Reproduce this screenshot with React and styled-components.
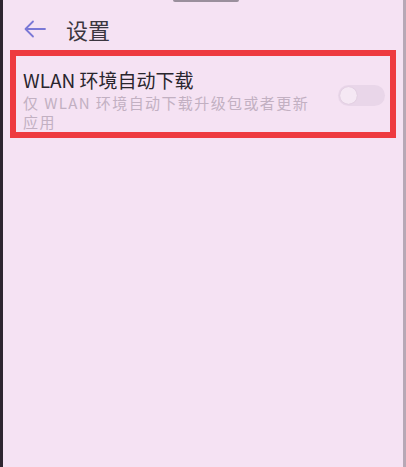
import styled, { createGlobalStyle } from "styled-components"

const GlobalStyle = createGlobalStyle`
    html, body {
        margin: 0;
        padding: 0;
        background: #f5e2f3;
    }
    * {
        box-sizing: border-box;
    }
`

const Screen = styled.div`
    position: relative;
    width: 406px;
    height: 467px;
    overflow: hidden;
    background: #f5e2f3;
    border-left: 3px solid #2e2530;
    border-right: 3px solid #b7a8b6;
    font-family: "Noto Sans CJK SC", "Noto Sans", sans-serif;
`
const Notch = styled.div`
    position: absolute;
    top: 0;
    left: 170px;
    width: 66px;
    height: 2px;
    border-radius: 0 0 3px 3px;
    background: #9a8f9c;
`
const Header = styled.div`
    display: flex;
    align-items: center;
    height: 50px;
    padding: 8px 0 0 21px;
    .back {
        display: block;
        width: 22px;
        height: 18px;
    }
    .title {
        margin-left: 20px;
        font-size: 22px;
        color: #3b3640;
        line-height: 1;
    }
`
const Highlight = styled.div`
    display: flex;
    align-items: center;
    margin: 0 7px 0 7px;
    padding: 11px 5px 1px 7px;
    border: 6px solid #ee3a40;
    .text {
        flex: 1;
        margin-right: 19px;
    }
    .name {
        font-size: 19px;
        line-height: 25px;
        color: #29252d;
        margin-bottom: 1px;
    }
    .desc {
        font-size: 15px;
        line-height: 19px;
        letter-spacing: 1.4px;
        color: #c2b0c2;
    }
`
const Toggle = styled.div`
    flex: none;
    position: relative;
    width: 47px;
    height: 21px;
    margin-bottom: 8px;
    border-radius: 11px;
    background: ${p => (p.on ? "#7a78d6" : "#e9d6e9")};
    .knob {
        position: absolute;
        top: 2px;
        left: ${p => (p.on ? "28px" : "2px")};
        width: 17px;
        height: 17px;
        border-radius: 50%;
        background: #f5e8f4;
        box-shadow: 0 0 1px rgba(120, 90, 120, 0.3);
    }
`

export default function App() {
    return (
        <Screen>
            <GlobalStyle />
            <Notch />
            <Header>
                <svg className="back" viewBox="0 0 22 18" fill="none">
                    <path d="M21 9H2M9 1.5L1.5 9L9 16.5" stroke="#7a78d6" strokeWidth="1.8" strokeLinecap="round" strokeLinejoin="round" />
                </svg>
                <div className="title">设置</div>
            </Header>
            <Highlight>
                <div className="text">
                    <div className="name">WLAN 环境自动下载</div>
                    <div className="desc">仅 WLAN 环境自动下载升级包或者更新应用</div>
                </div>
                <Toggle>
                    <div className="knob" />
                </Toggle>
            </Highlight>
        </Screen>
    )
}
